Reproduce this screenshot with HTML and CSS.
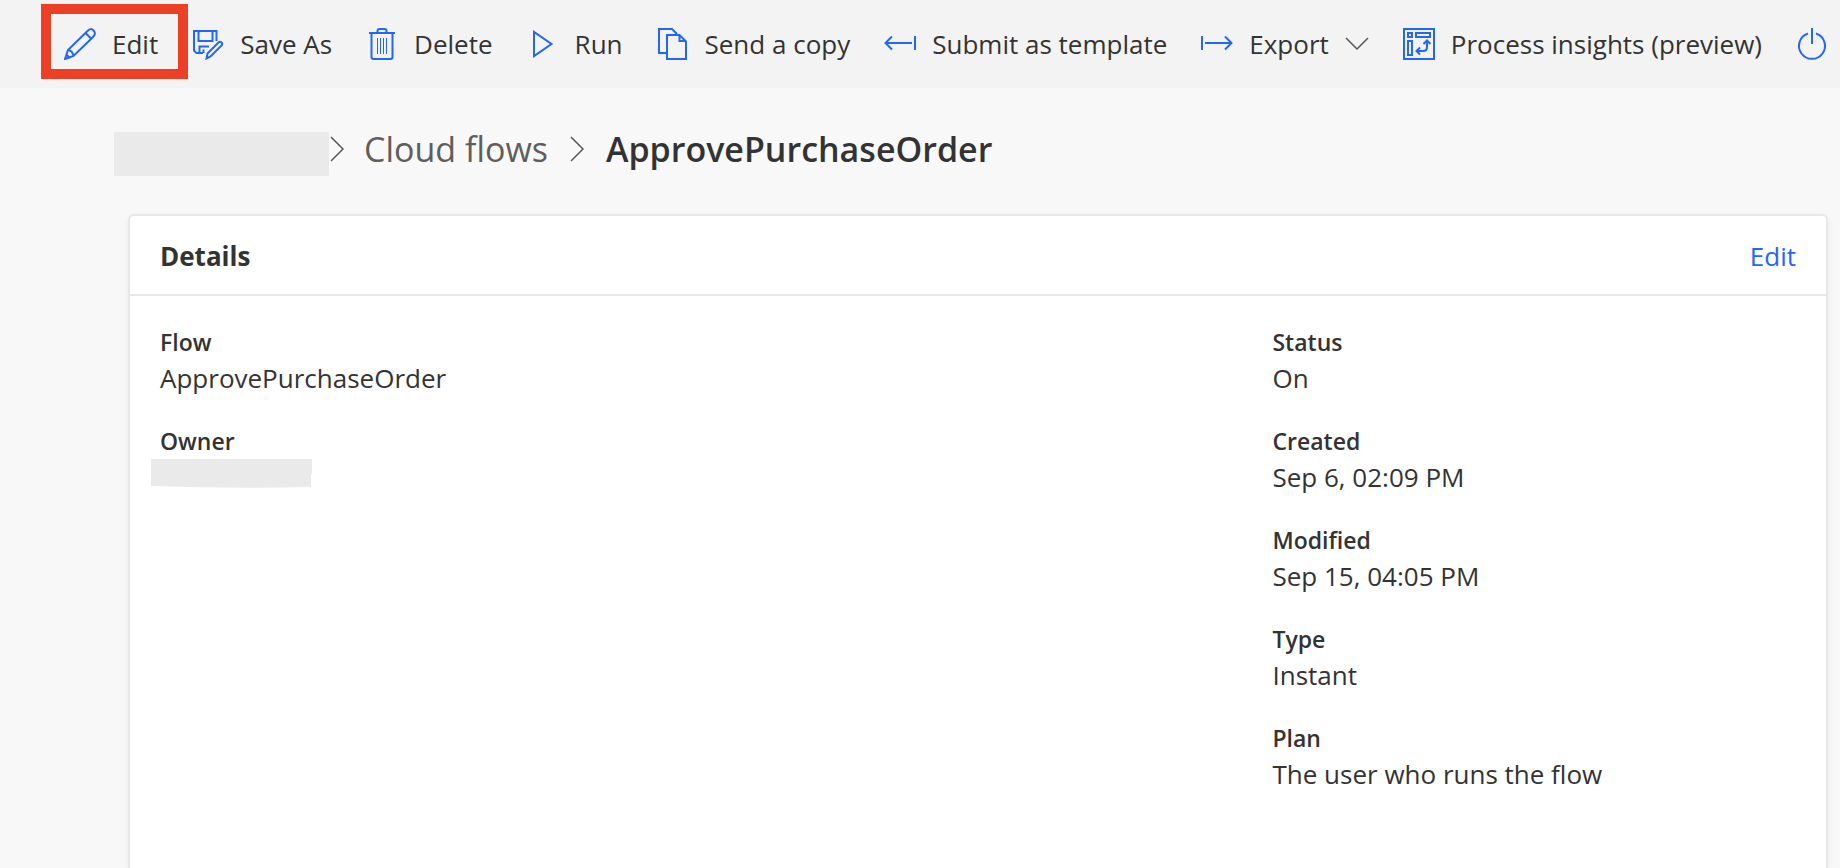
FILE: index.html
```html
<!DOCTYPE html>
<html lang="en">
<head>
<meta charset="utf-8">
<title>ApprovePurchaseOrder</title>
<link rel="stylesheet" href="styles.css">
</head>
<body>
<div class="page">
  <div class="toolbar" role="toolbar" aria-label="Flow commands">
    <button class="command command-highlight" type="button">
      <svg class="icon" viewBox="0 0 32 32"><path d="M1 31 4 22 23.500 3Q27-.5 29.500 2.500 32.500 5.500 29 9L9.500 28ZM4 22Q8.500 22.500 9.500 28M21.500 5 27 10.500M1 31 2.500 26.500 5.500 29.500Z"/></svg>
      <span>Edit</span>
    </button>
    <button class="command" type="button">
      <svg class="icon" viewBox="0 0 32 32"><path d="M11 25H4.500L2 22.500V3H24.500V13M6.500 3V13H20.500V3M7.500 25V18.500H17M11.500 25V21.500M14.500 30.500 15.500 25.500 26.500 14.500Q28 13 29.500 14.500 31 16 29.500 17.500L18.500 28.500Z"/></svg>
      <span>Save As</span>
    </button>
    <button class="command" type="button">
      <svg class="icon" viewBox="0 0 32 32"><path d="M3 5H29M11.500 5V3Q11.500 1 13.500 1H18.500Q20.500 1 20.500 3V5M5.500 5V29Q5.500 31 7.500 31H24.500Q26.500 31 26.500 29V5"/><path class="thin" d="M11.500 10V26M14.500 10V26M17.500 10V26M20.500 10V26"/></svg>
      <span>Delete</span>
    </button>
    <button class="command" type="button">
      <svg class="icon" viewBox="0 0 32 32"><path d="M7 4V28L24.500 16Z"/></svg>
      <span>Run</span>
    </button>
    <button class="command" type="button">
      <svg class="icon" viewBox="0 0 32 32"><path d="M10 25H2V1H15L20 6M10 7H22.500L29 13.500V31H10ZM22.500 7V13H29"/></svg>
      <span>Send a copy</span>
    </button>
    <button class="command" type="button">
      <svg class="icon" viewBox="0 0 32 32"><path d="M28 15H1.500M8 8.500 1.500 15 8 21.500M31 8V22"/></svg>
      <span>Submit as template</span>
    </button>
    <button class="command" type="button" aria-haspopup="menu">
      <svg class="icon" viewBox="0 0 32 32"><path d="M4 15H30.500M24 8.500 30.500 15 24 21.500M1 8V22"/></svg>
      <span>Export</span>
      <svg class="chevron-down" viewBox="0 0 24 24"><path d="M1 6 12 17 23 6"/></svg>
    </button>
    <button class="command" type="button">
      <svg class="icon" viewBox="0 0 32 32"><path d="M1 1H31V31H1ZM5 5H9V9H5ZM13 5H27V9H13ZM5 13H9V27H5ZM14 23H20Q24 23 24 19V13M17 19.500 13.500 23 17 26.500M20.500 16 24 12.500 27.500 16"/></svg>
      <span>Process insights (preview)</span>
    </button>
    <button class="command" type="button" aria-label="Turn off">
      <svg class="icon" viewBox="0 0 32 32"><path d="M16 0V16M12 5.500A13 13 0 1 0 20 5.500"/></svg>
    </button>
  </div>

  <nav class="breadcrumb" aria-label="Breadcrumb">
    <span class="crumb-hidden"></span>
    <svg class="chevron-right" viewBox="0 0 14 26"><path d="M1 1 13 13 1 25"/></svg>
    <a class="crumb" href="#">Cloud flows</a>
    <svg class="chevron-right" viewBox="0 0 14 26"><path d="M1 1 13 13 1 25"/></svg>
    <h1 class="crumb-current">ApprovePurchaseOrder</h1>
  </nav>

  <section class="card">
    <header class="card-header">
      <h2 class="card-title">Details</h2>
      <a class="card-link" href="#">Edit</a>
    </header>
    <div class="card-body">
      <dl class="fields">
        <div><dt>Flow</dt><dd>ApprovePurchaseOrder</dd></div>
        <div><dt>Owner</dt><dd><svg class="owner-hidden" viewBox="0 0 161 29"><path d="M0 0H161V15H160V28Q80 30 0 27Z"/></svg></dd></div>
      </dl>
      <dl class="fields">
        <div><dt>Status</dt><dd>On</dd></div>
        <div><dt>Created</dt><dd>Sep 6, 02:09 PM</dd></div>
        <div><dt>Modified</dt><dd>Sep 15, 04:05 PM</dd></div>
        <div><dt>Type</dt><dd>Instant</dd></div>
        <div><dt>Plan</dt><dd>The user who runs the flow</dd></div>
      </dl>
    </div>
  </section>
</div>
</body>
</html>
```
FILE: styles.css
```css
* { box-sizing: border-box; }

body {
  margin: 0;
  background: #f8f8f8;
  color: #333;
  font-family: "Segoe UI", "Open Sans", "Noto Sans", sans-serif;
  font-size: 26px;
}

.page {
  display: flex;
  flex-direction: column;
  min-height: 100vh;
}

.toolbar {
  display: flex;
  align-items: center;
  gap: 34px;
  height: 88px;
  padding-left: 64px;
  background: #f3f3f3;
  overflow: hidden;
}

.command {
  display: flex;
  flex: none;
  align-items: center;
  gap: 16px;
  padding: 0;
  border: 0;
  background: none;
  color: inherit;
  font: inherit;
  line-height: 36px;
  white-space: nowrap;
}

.command-highlight { position: relative; }

.command-highlight::after {
  content: "";
  position: absolute;
  inset: -22px -30px -17px -23px;
  border: 10px solid #eb4025;
}

.icon {
  width: 32px;
  height: 32px;
  fill: none;
  stroke: #2266fa;
  stroke-width: 2;
}

.icon .thin { stroke-width: 1; }

.chevron-down,
.chevron-right {
  flex: none;
  fill: none;
  stroke: #555;
  stroke-width: 1.500;
}

.chevron-down { width: 24px; height: 24px; }
.chevron-right { width: 14px; height: 26px; }

.breadcrumb {
  display: flex;
  align-items: center;
  height: 44px;
  margin: 44px 0 38px 114px;
  padding-bottom: 10px;
  font-size: 34px;
  line-height: 34px;
}

.crumb-hidden {
  align-self: flex-start;
  width: 215px;
  height: 44px;
  margin-right: 1px;
  background: #eaeaea;
}

.crumb {
  margin: 0 22px 0 20px;
  color: #605e5c;
  text-decoration: none;
}

.crumb-current {
  margin: 0 0 0 22px;
  font-size: 34px;
  font-weight: 600;
}

.card {
  display: flex;
  flex: 1;
  flex-direction: column;
  margin: 0 12px 0 128px;
  border: 2px solid #e8e8e8;
  border-bottom: 0;
  border-radius: 6px 6px 0 0;
  background: #fff;
  box-shadow: 0 2px 8px #0000000d;
}

.card-header {
  display: flex;
  align-items: center;
  justify-content: space-between;
  height: 80px;
  padding: 2px 30px 0;
  border-bottom: 2px solid #e8e8e8;
}

.card-title {
  margin: 0;
  font-size: 26px;
  font-weight: 700;
}

.card-link {
  color: #2266fa;
  text-decoration: none;
}

.card-body {
  display: grid;
  grid-template-columns: 17fr 8fr;
  padding: 28px 30px;
}

.fields {
  display: flex;
  flex-direction: column;
  gap: 27px;
  margin: 0;
}

.fields dt {
  font-size: 23px;
  font-weight: 600;
  line-height: 36px;
}

.fields dd {
  margin: 0;
  line-height: 36px;
}

.owner-hidden {
  display: block;
  width: 161px;
  height: 29px;
  margin-left: -9px;
  fill: #eaeaea;
}
```
